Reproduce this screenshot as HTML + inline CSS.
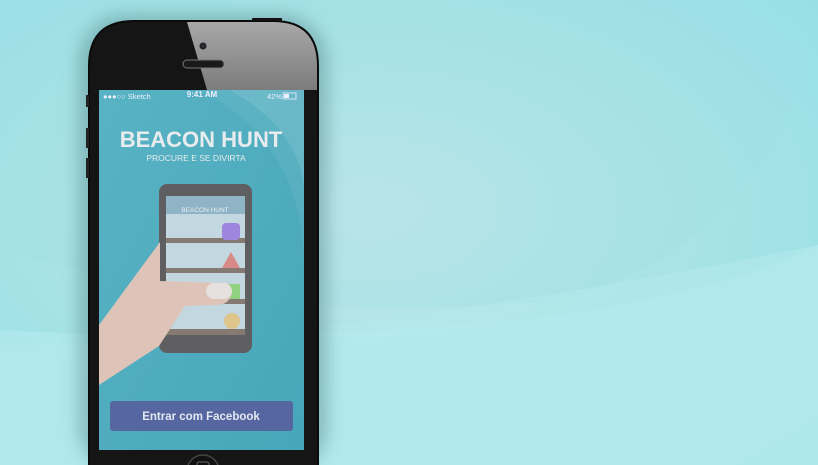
<!DOCTYPE html>
<html><head><style>
html,body{margin:0;padding:0;width:818px;height:465px;overflow:hidden}
body{background:#aee6e9}
svg{display:block}
text{font-family:"Liberation Sans",sans-serif}
</style></head><body>
<svg width="818" height="465" viewBox="0 0 818 465">
<defs>
<radialGradient id="bg1" cx="0.45" cy="0.45" r="0.8">
<stop offset="0" stop-color="#c4e7ea"/><stop offset="0.5" stop-color="#a8e3e6"/><stop offset="1" stop-color="#90dfe5"/>
</radialGradient>
<linearGradient id="scr" x1="0" y1="0" x2="1" y2="1">
<stop offset="0" stop-color="#58b3c4"/><stop offset="1" stop-color="#47a6b9"/>
</linearGradient>
<linearGradient id="glare" x1="0" y1="0" x2="0" y2="1">
<stop offset="0" stop-color="#a8a8a8"/><stop offset="1" stop-color="#7c7c7c"/>
</linearGradient>
<filter id="sh" x="-30%" y="-30%" width="160%" height="160%"><feGaussianBlur stdDeviation="8"/></filter>
</defs>
<rect width="818" height="465" fill="url(#bg1)"/>
<path d="M0 250 Q300 330 560 300 Q760 250 818 30 L818 0 L0 0Z" fill="#9fdfe4" opacity="0.3"/>
<path d="M0 330 Q260 345 520 320 Q720 295 818 245 L818 465 L0 465Z" fill="#b2eaee" opacity="0.7"/>
<path d="M0 345 Q300 350 818 245 L818 465 L0 465Z" fill="#b6eaee" opacity="0.5"/>
<!-- phone -->
<rect x="78" y="14" width="250" height="460" rx="48" fill="#4c7a7a" opacity="0.4" filter="url(#sh)"/>
<path d="M88 465 L88 66 Q88 20 134 20 L273 20 Q319 20 319 66 L319 465Z" fill="#0a0a0a"/>
<path d="M90 465 L90 66 Q90 22 134 22 L273 22 Q317 22 317 66 L317 465Z" fill="#151515"/>
<path d="M187 22 L273 22 Q317 22 317 66 L317 90 L207 90Z" fill="url(#glare)"/>
<circle cx="203" cy="46" r="3.5" fill="#222"/><circle cx="203" cy="46" r="1.5" fill="#334"/>
<rect x="183" y="60" width="41" height="8" rx="4" fill="#1a1a1a" stroke="#777" stroke-width="1"/>
<rect x="252" y="18" width="30" height="3" rx="1" fill="#111"/>
<rect x="86" y="95" width="3" height="12" fill="#222"/><rect x="86" y="128" width="3" height="20" fill="#222"/><rect x="86" y="158" width="3" height="20" fill="#222"/>
<circle cx="203" cy="471" r="16" fill="#111" stroke="#444" stroke-width="1.5"/>
<rect x="197" y="462" width="12" height="10" rx="2" fill="none" stroke="#666"/>
<!-- screen -->
<rect x="99" y="90" width="205" height="360" fill="url(#scr)"/>
<path d="M230 90 Q300 130 304 190 L304 90Z" fill="#fff" opacity="0.1"/>
<path d="M200 90 Q300 140 304 260 L304 90Z" fill="#fff" opacity="0.06"/>
<text x="103" y="99" font-size="7.5" fill="#eef">●●●○○ Sketch</text>
<text x="202" y="97" font-size="8" font-weight="bold" fill="#eef" text-anchor="middle">9:41 AM</text>
<text x="267" y="99" font-size="7.5" fill="#eef">42%</text>
<rect x="283" y="93" width="13" height="6" fill="none" stroke="#eef" stroke-width="0.8"/><rect x="284" y="94" width="5" height="4" fill="#eef"/>
<text x="201" y="147" font-size="22" font-weight="bold" fill="#e8ecee" text-anchor="middle">BEACON HUNT</text>
<text x="196" y="161" font-size="8.5" fill="#e8ecee" text-anchor="middle">PROCURE E SE DIVIRTA</text>
<!-- inner phone -->
<rect x="159" y="184" width="93" height="169" rx="8" fill="#5f5f61"/>
<rect x="166" y="196" width="79" height="139" fill="#c2d7e0"/>
<rect x="166" y="196" width="79" height="18" fill="#8fb4c6"/>
<text x="205" y="212" font-size="6.5" fill="#e6eef2" text-anchor="middle">BEACON HUNT</text>
<rect x="166" y="238" width="79" height="5" fill="#857a71"/>
<rect x="166" y="268" width="79" height="5" fill="#857a71"/>
<rect x="166" y="299" width="79" height="5" fill="#857a71"/>
<rect x="166" y="329" width="79" height="6" fill="#857a71"/>
<rect x="222" y="223" width="18" height="17" rx="4" fill="#9e86de"/>
<path d="M231 252 L240 268 L222 268Z" fill="#d88a86"/>
<rect x="228" y="284" width="12" height="15" fill="#8fd17e"/>
<circle cx="232" cy="321" r="8" fill="#dec58a"/>
<!-- hand -->
<path d="M99 325 L160 242 L160 281 L223 283 Q235 288 231 296 Q228 304 218 305 L185 306 L159 346 L99 385Z" fill="#dec4b8"/>
<rect x="206" y="283" width="26" height="16" rx="8" fill="#e6e0de"/>
<!-- button -->
<rect x="110" y="401" width="183" height="30" rx="3" fill="#5566a0"/>
<text x="201" y="420" font-size="11.5" font-weight="bold" fill="#e4e8f0" text-anchor="middle">Entrar com Facebook</text>
</svg>
</body></html>
